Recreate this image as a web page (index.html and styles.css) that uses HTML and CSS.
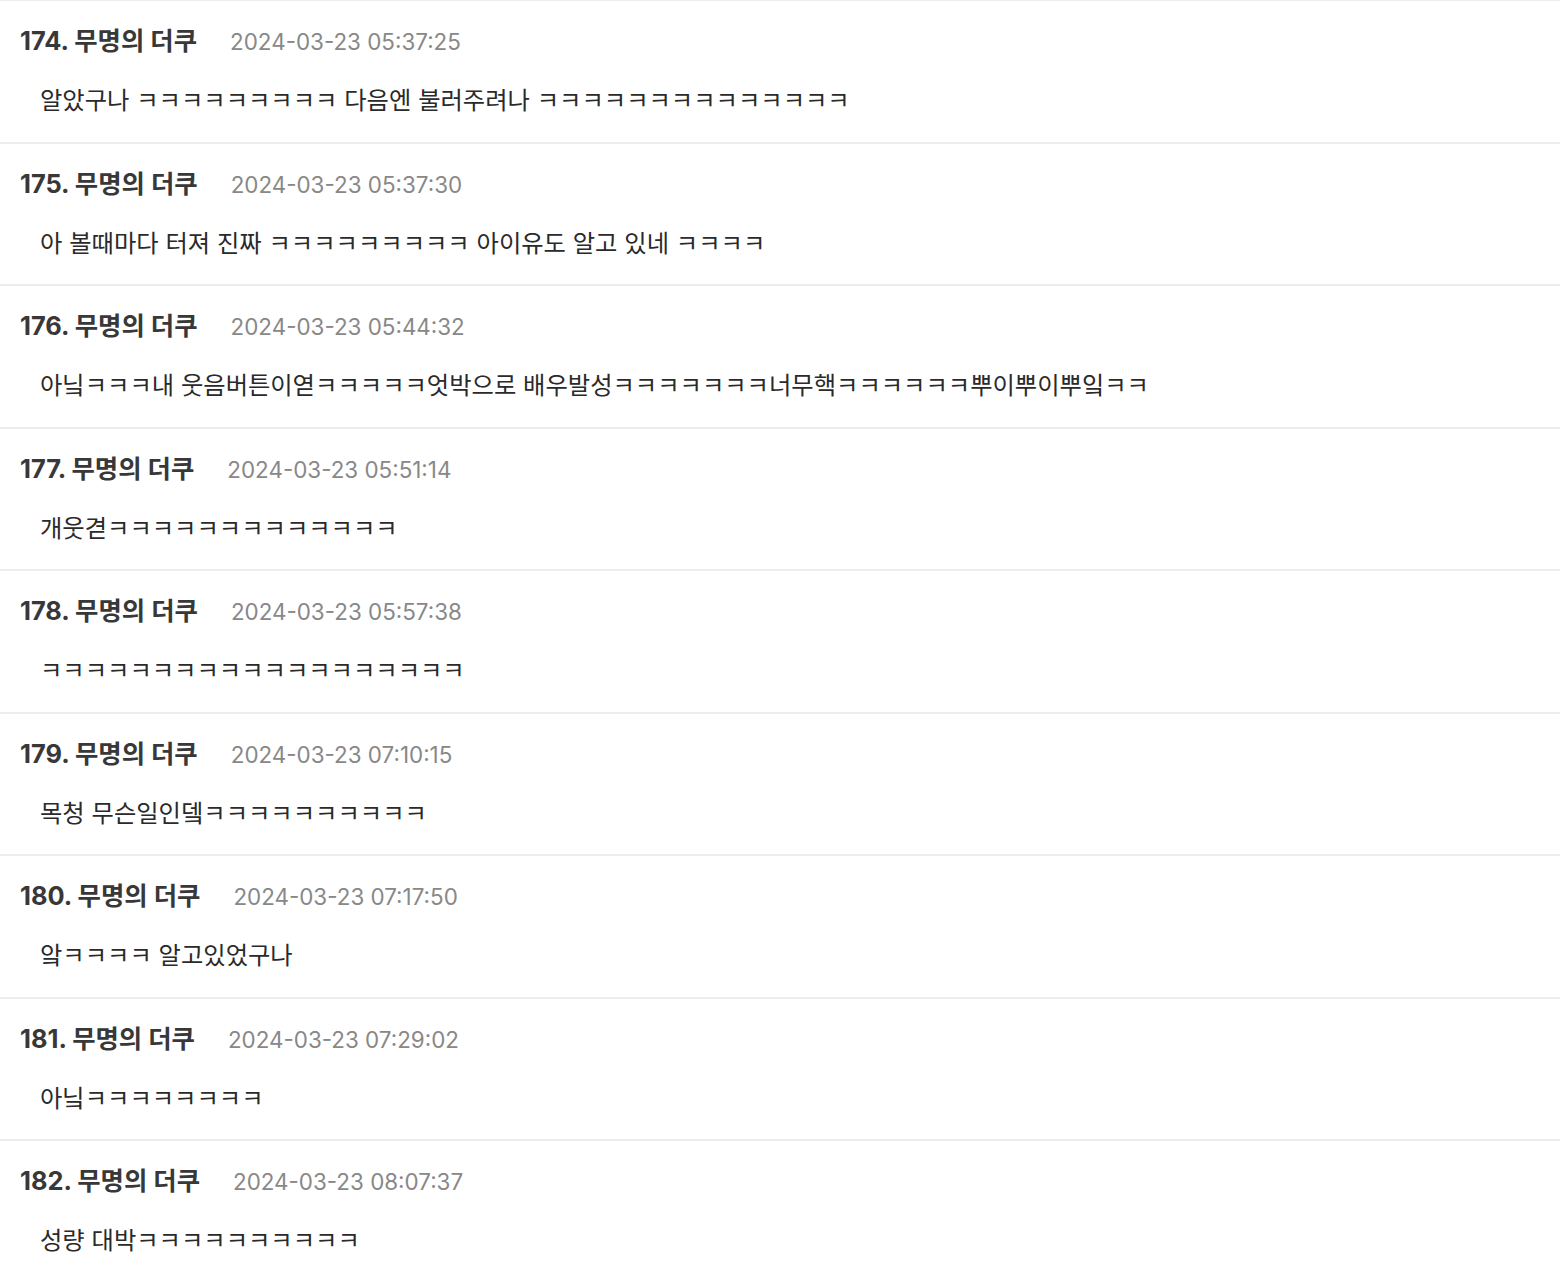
FILE: index.html
```html
<!DOCTYPE html>
<html lang="ko">
<head>
<meta charset="utf-8">
<title>댓글</title>
<link rel="stylesheet" href="styles.css">
</head>
<body>
<div class="list">
  <div class="item">
    <div class="head"><span class="name">174. 무명의 더쿠</span><span class="date">2024-03-23 05:37:25</span></div>
    <div class="body">알았구나 ㅋㅋㅋㅋㅋㅋㅋㅋㅋ 다음엔 불러주려나 ㅋㅋㅋㅋㅋㅋㅋㅋㅋㅋㅋㅋㅋㅋ</div>
  </div>
  <div class="item">
    <div class="head"><span class="name">175. 무명의 더쿠</span><span class="date">2024-03-23 05:37:30</span></div>
    <div class="body">아 볼때마다 터져 진짜 ㅋㅋㅋㅋㅋㅋㅋㅋㅋ 아이유도 알고 있네 ㅋㅋㅋㅋ</div>
  </div>
  <div class="item">
    <div class="head"><span class="name">176. 무명의 더쿠</span><span class="date">2024-03-23 05:44:32</span></div>
    <div class="body">아닠ㅋㅋㅋ내 웃음버튼이엳ㅋㅋㅋㅋㅋ엇박으로 배우발성ㅋㅋㅋㅋㅋㅋㅋ너무핵ㅋㅋㅋㅋㅋㅋ뿌이뿌이뿌잌ㅋㅋ</div>
  </div>
  <div class="item">
    <div class="head"><span class="name">177. 무명의 더쿠</span><span class="date">2024-03-23 05:51:14</span></div>
    <div class="body">개웃겯ㅋㅋㅋㅋㅋㅋㅋㅋㅋㅋㅋㅋㅋ</div>
  </div>
  <div class="item">
    <div class="head"><span class="name">178. 무명의 더쿠</span><span class="date">2024-03-23 05:57:38</span></div>
    <div class="body">ㅋㅋㅋㅋㅋㅋㅋㅋㅋㅋㅋㅋㅋㅋㅋㅋㅋㅋㅋ</div>
  </div>
  <div class="item">
    <div class="head"><span class="name">179. 무명의 더쿠</span><span class="date">2024-03-23 07:10:15</span></div>
    <div class="body">목청 무슨일인뎈ㅋㅋㅋㅋㅋㅋㅋㅋㅋㅋ</div>
  </div>
  <div class="item">
    <div class="head"><span class="name">180. 무명의 더쿠</span><span class="date">2024-03-23 07:17:50</span></div>
    <div class="body">앜ㅋㅋㅋㅋ 알고있었구나</div>
  </div>
  <div class="item">
    <div class="head"><span class="name">181. 무명의 더쿠</span><span class="date">2024-03-23 07:29:02</span></div>
    <div class="body">아닠ㅋㅋㅋㅋㅋㅋㅋㅋ</div>
  </div>
  <div class="item">
    <div class="head"><span class="name">182. 무명의 더쿠</span><span class="date">2024-03-23 08:07:37</span></div>
    <div class="body">성량 대박ㅋㅋㅋㅋㅋㅋㅋㅋㅋㅋ</div>
  </div>
</div>
</body>
</html>
```

FILE: styles.css
```css
html, body {
  margin: 0;
  padding: 0;
  background: #ffffff;
}
body {
  font-family: "Inter", "Noto Sans CJK KR", sans-serif;
  overflow: hidden;
}
.list {
  border-top: 2px solid #ededed;
  margin-top: -1px;
}
.item {
  box-sizing: border-box;
  height: 142.5px;
  border-bottom: 2px solid #ededed;
  padding: 24px 20px 0 20px;
}
.head {
  display: flex;
  align-items: baseline;
  gap: 33px;
  height: 32px;
  line-height: 32px;
}
.name {
  font-size: 25.4px;
  font-weight: 700;
  color: #383838;
}
.date {
  font-size: 22.4px;
  font-weight: 400;
  color: #888888;
}
.body {
  margin-top: 27px;
  padding-left: 20px;
  font-size: 24.3px;
  line-height: 32px;
  color: #2a2a2a;
  white-space: nowrap;
}
```
